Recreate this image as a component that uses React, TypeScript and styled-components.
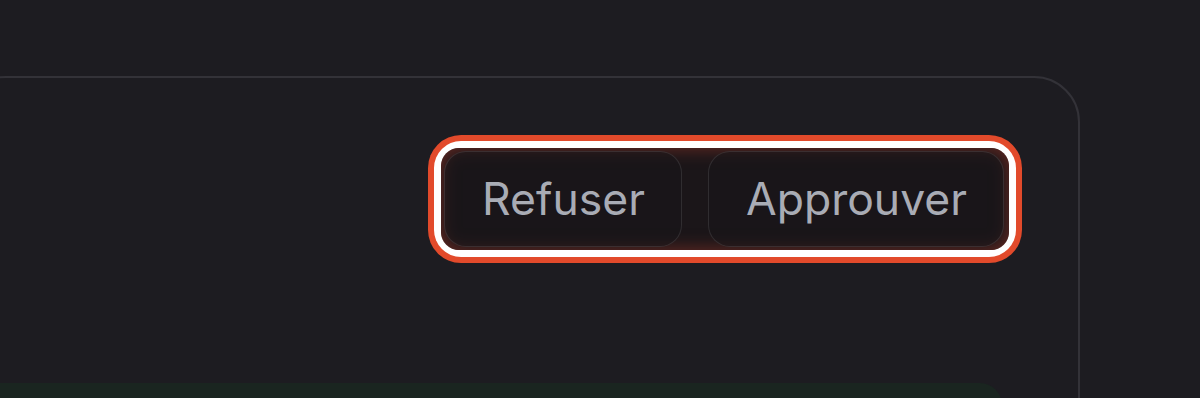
import React from "react";
import styled, { createGlobalStyle } from "styled-components";

const Global = createGlobalStyle`
  html, body {
    margin: 0;
    padding: 0;
    background: #1d1c21;
    overflow: hidden;
  }
  * { box-sizing: border-box; }
`;

const Page = styled.div`
  width: 1200px;
  height: 398px;
  overflow: hidden;
  padding-top: 76px;
  background: #1d1c21;
  font-family: Inter, "Noto Sans", sans-serif;
`;

const Card = styled.section`
  margin-left: -40px;
  width: 1120px;
  height: 400px;
  border: 2px solid #333238;
  border-radius: 46px;
  background: #1d1c21;
  padding: 70px 69px 0 0;
  display: flex;
  flex-direction: column;
  align-items: flex-end;
`;

const Highlight = styled.div`
  border-radius: 20px;
  box-shadow: 0 0 0 7px #ffffff, 0 0 0 13px #e24a2b;
`;

const Actions = styled.div`
  display: flex;
  gap: 26px;
  padding: 3px 5px 3px 3px;
  border-radius: 18px;
  background: #1b1619;
  box-shadow: inset 0 0 18px rgba(180, 62, 45, 0.55);
`;

const Button = styled.button`
  height: 96px;
  padding: 0 36px 0 37px;
  border: 1px solid rgba(255, 255, 255, 0.1);
  border-radius: 22px;
  background: rgba(24, 21, 26, 0.55);
  color: #a9acb5;
  font-family: Inter, "Noto Sans", sans-serif;
  font-size: 44.5px;
  font-weight: 400;
  cursor: pointer;
`;

const Footer = styled.div`
  align-self: flex-start;
  margin-top: 133px;
  width: 1040px;
  height: 60px;
  border-radius: 22px 22px 0 0;
  background: #1a2520;
`;

export default function App() {
  return (
    <>
      <Global />
      <Page>
        <Card>
          <Highlight>
            <Actions>
              <Button>Refuser</Button>
              <Button>Approuver</Button>
            </Actions>
          </Highlight>
          <Footer />
        </Card>
      </Page>
    </>
  );
}
